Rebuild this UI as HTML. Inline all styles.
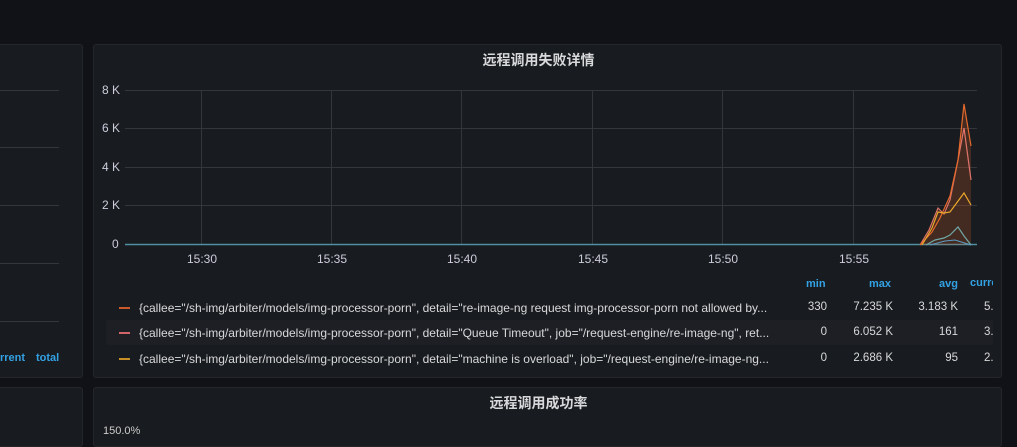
<!DOCTYPE html>
<html><head><meta charset="utf-8"><style>
body{margin:0;width:1017px;height:429px;background:#111217;overflow:hidden;position:relative;font-family:"Liberation Sans","Noto Sans CJK SC",sans-serif;color:#ccccdc}
.p{position:absolute;background:#181b1f;border:1px solid #24262b;border-radius:3px;box-sizing:border-box}
.t{position:absolute;font-size:12px;white-space:nowrap}
.title{position:absolute;font-size:14px;font-weight:bold;color:#d8d9da;text-align:center}
.b{color:#33a2e5;font-weight:bold;font-size:11px}
.leg{position:absolute;font-size:12px;color:#d8d9da;white-space:nowrap}
.num{position:absolute;font-size:11.5px;color:#d8d9da;text-align:right;white-space:nowrap}
</style></head><body>
<div class="p" style="left:-5px;top:44px;width:88px;height:334px"></div>
<div class="p" style="left:93px;top:44px;width:909px;height:334px"></div>
<div class="p" style="left:-5px;top:387px;width:88px;height:60px"></div>
<div class="p" style="left:93px;top:387px;width:909px;height:60px"></div>
<div class="title" style="left:84px;width:909px;top:50px">远程调用失败详情</div>
<div class="title" style="left:84px;width:909px;top:393px">远程调用成功率</div>
<div class="t" style="left:103px;top:425px;font-size:11px;color:#ccc">150.0%</div>
<svg width="1017" height="429" style="position:absolute;left:0;top:0">
<g stroke="#34363b" stroke-width="1">
<line x1="0" x2="59" y1="90.5" y2="90.5"/><line x1="0" x2="59" y1="147.5" y2="147.5"/><line x1="0" x2="59" y1="205.5" y2="205.5"/><line x1="0" x2="59" y1="263.5" y2="263.5"/><line x1="0" x2="59" y1="321.5" y2="321.5"/>
<line x1="125" x2="977" y1="90.5" y2="90.5"/><line x1="125" x2="977" y1="128.5" y2="128.5"/><line x1="125" x2="977" y1="167.5" y2="167.5"/><line x1="125" x2="977" y1="205.5" y2="205.5"/>
<line x1="201.5" x2="201.5" y1="90" y2="245"/><line x1="331.5" x2="331.5" y1="90" y2="245"/><line x1="461.5" x2="461.5" y1="90" y2="245"/><line x1="592.5" x2="592.5" y1="90" y2="245"/><line x1="722.5" x2="722.5" y1="90" y2="245"/><line x1="853.5" x2="853.5" y1="90" y2="245"/>
</g>
<line x1="125" x2="977" y1="244.5" y2="244.5" stroke="#4f8fa0" stroke-width="1.5"/>
<path d="M920,245 L929,230 L938,208 L944,214 L950,200 L958,160 L964,104 L971,146 L971,245Z" fill="rgba(200,90,40,0.25)"/>
<path d="M920,245 L929,230 L938,208 L944,214 L950,200 L958,160 L964,128 L971,180" fill="none" stroke="#e0746b" stroke-width="1.2"/>
<path d="M920,245 L932,232 L940,218 L950,196 L958,160 L964,104 L971,146" fill="none" stroke="#e5692b" stroke-width="1.2"/>
<path d="M922,245 L932,228 L938,212 L944,213 L950,212 L964,193 L971,205" fill="none" stroke="#eba82a" stroke-width="1.2"/>
<path d="M926,245 L935,240 L944,238 L950,235 L958,227 L964,236 L971,245" fill="none" stroke="#6fa7a6" stroke-width="1.2"/>
<path d="M930,245 L945,241 L955,240 L971,245" fill="none" stroke="#5c9cc4" stroke-width="1"/>
</svg>
<div class="t" style="left:102px;top:83px">8 K</div>
<div class="t" style="left:102px;top:121px">6 K</div>
<div class="t" style="left:102px;top:160px">4 K</div>
<div class="t" style="left:102px;top:198px">2 K</div>
<div class="t" style="left:112px;top:237px">0</div>
<div class="t" style="left:187px;top:252px">15:30</div>
<div class="t" style="left:317px;top:252px">15:35</div>
<div class="t" style="left:447px;top:252px">15:40</div>
<div class="t" style="left:578px;top:252px">15:45</div>
<div class="t" style="left:708px;top:252px">15:50</div>
<div class="t" style="left:839px;top:252px">15:55</div>
<div class="t b" style="left:0px;top:352px">rrent</div><div class="t b" style="left:36px;top:352px">total</div>
<div class="t b" style="left:806px;top:278px">min</div>
<div class="t b" style="left:869px;top:278px">max</div>
<div class="t b" style="left:939px;top:278px">avg</div>
<div class="t b" style="left:970px;top:277px;width:23px;overflow:hidden">current</div>
<div style="position:absolute;left:106px;top:320px;width:887px;height:25px;background:#1d1f24"></div>
<div style="position:absolute;left:119px;top:307px;width:11px;height:2px;background:#c8592b"></div>
<div style="position:absolute;left:119px;top:332px;width:11px;height:2px;background:#d0666a"></div>
<div style="position:absolute;left:119px;top:358px;width:11px;height:2px;background:#c88f26"></div>
<div class="leg" style="left:139px;top:301px">{callee="/sh-img/arbiter/models/img-processor-porn", detail="re-image-ng request img-processor-porn not allowed by...</div>
<div class="leg" style="left:139px;top:326px">{callee="/sh-img/arbiter/models/img-processor-porn", detail="Queue Timeout", job="/request-engine/re-image-ng", ret...</div>
<div class="leg" style="left:139px;top:352px">{callee="/sh-img/arbiter/models/img-processor-porn", detail="machine is overload", job="/request-engine/re-image-ng...</div>
<div class="num" style="right:190px;top:301px">330</div><div class="num" style="right:124px;top:301px">7.235 K</div><div class="num" style="right:59px;top:301px">3.183 K</div><div class="num" style="left:984px;top:301px">5.</div>
<div class="num" style="right:190px;top:326px">0</div><div class="num" style="right:124px;top:326px">6.052 K</div><div class="num" style="right:59px;top:326px">161</div><div class="num" style="left:984px;top:326px">3.</div>
<div class="num" style="right:190px;top:352px">0</div><div class="num" style="right:124px;top:352px">2.686 K</div><div class="num" style="right:59px;top:352px">95</div><div class="num" style="left:984px;top:352px">2.</div>
</body></html>
